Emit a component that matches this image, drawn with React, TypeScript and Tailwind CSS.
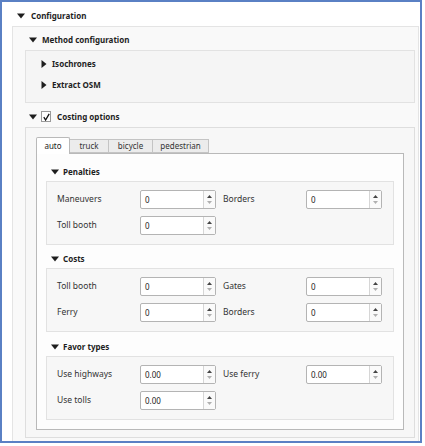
import React from "react";

const font = { fontFamily: '"Noto Sans", "Liberation Sans", sans-serif' };

function Down() {
    return (
        <svg width="8" height="6" viewBox="0 0 8 6" className="shrink-0">
            <path d="M0 0.5 L8 0.5 L4 5.5 Z" fill="#1e1e1e" />
        </svg>
    );
}

function Right() {
    return (
        <svg width="6" height="8" viewBox="0 0 6 8" className="shrink-0">
            <path d="M0.5 0 L5.5 4 L0.5 8 Z" fill="#1e1e1e" />
        </svg>
    );
}

function Spin({ value }: { value: string }) {
    return (
        <div className="w-[76px] h-[19px] flex bg-white border border-[#b4b4b4] rounded-[2px]">
            <div className="flex-1 flex items-center pl-[4px] text-[8px] text-[#222]">{value}</div>
            <div className="w-[12px] border-l border-[#d6d6d6] flex flex-col items-center justify-center gap-[3px] bg-[#fafafa]">
                <svg width="5" height="3" viewBox="0 0 5 3">
                    <path d="M0 3 L2.5 0 L5 3 Z" fill="#444" />
                </svg>
                <svg width="5" height="3" viewBox="0 0 5 3">
                    <path d="M0 0 L2.5 3 L5 0 Z" fill="#b0b0b0" />
                </svg>
            </div>
        </div>
    );
}

function Row({ label, value, label2, value2 }: { label: string; value: string; label2?: string; value2?: string }) {
    return (
        <div className="flex items-center h-[19px]">
            <div className="w-[83px] text-[8.5px] text-[#333]">{label}</div>
            <Spin value={value} />
            {label2 && (
                <>
                    <div className="w-[90px] pl-[7px] text-[8.5px] text-[#333]">{label2}</div>
                    <Spin value={value2 ?? ""} />
                </>
            )}
        </div>
    );
}

function Section({ title, children, mt }: { title: string; children: React.ReactNode; mt: string }) {
    return (
        <>
            <div className={`h-[18px] flex items-center gap-[4px] pl-[14px] ${mt}`}>
                <Down />
                <span className="text-[8px] font-bold text-[#1e1e1e]">{title}</span>
            </div>
            <div className="mx-[9px] h-[64px] border border-[#e2e2e2] bg-[#f7f7f7] pl-[10px] pt-[8px] flex flex-col gap-[7px]">
                {children}
            </div>
        </>
    );
}

export default function App() {
    return (
        <div className="w-[425px] h-[446px] bg-white" style={font}>
            <div className="w-[422px] h-[443px] border-2 border-[#5a80c4] flex flex-col">
                <div className="h-[24px] pt-[4px] flex items-center gap-[6px] pl-[15px] shrink-0">
                    <Down />
                    <span className="text-[8px] font-bold text-[#1e1e1e]">Configuration</span>
                </div>
                <div className="flex-1 ml-[10px] mr-[1px] border-l border-t border-r border-[#e4e4e4] bg-[#f9f9f9] flex flex-col">
                    <div className="h-[23px] pt-[3px] flex items-center gap-[5px] pl-[16px]">
                        <Down />
                        <span className="text-[8px] font-bold text-[#1e1e1e]">Method configuration</span>
                    </div>
                    <div className="ml-[12px] mr-[3px] h-[53px] border border-[#e2e2e2] bg-[#f5f5f5] flex flex-col pl-[15px] pt-[7px] gap-[9px]">
                        <div className="h-[12px] flex items-center gap-[5px]">
                            <Right />
                            <span className="text-[8px] font-bold text-[#1e1e1e]">Isochrones</span>
                        </div>
                        <div className="h-[12px] flex items-center gap-[5px]">
                            <Right />
                            <span className="text-[8px] font-bold text-[#1e1e1e]">Extract OSM</span>
                        </div>
                    </div>
                    <div className="mt-[3px] h-[21px] flex items-center pl-[16px]">
                        <Down />
                        <div className="ml-[4px] w-[10px] h-[11px] border border-[#9a9a9a] bg-white flex items-center justify-center">
                            <svg width="7" height="8" viewBox="0 0 7 8">
                                <path d="M0.8 4.2 L2.6 7 L6.2 0.8" stroke="#111" strokeWidth="1.3" fill="none" />
                            </svg>
                        </div>
                        <span className="ml-[6px] text-[8px] font-bold text-[#1e1e1e]">Costing options</span>
                    </div>
                    <div className="ml-[12px] mr-[3px] h-[311px] border border-[#dedede] bg-[#f7f7f7] pl-[10px] pr-[10px] pt-[8px]">
                        <div className="flex items-end h-[17px]">
                            <div className="h-[17px] w-[34px] bg-white border border-b-0 border-[#b9b9b9] rounded-t-[2px] flex items-center justify-center text-[8px] text-[#222] relative z-10 mb-[-1px] pb-[1px]">
                                auto
                            </div>
                            <div className="h-[14px] w-[39px] bg-[#ececec] border border-l-0 border-[#c4c4c4] flex items-center justify-center text-[8px] text-[#333]">
                                truck
                            </div>
                            <div className="h-[14px] w-[44px] bg-[#ececec] border border-l-0 border-[#c4c4c4] flex items-center justify-center text-[8px] text-[#333]">
                                bicycle
                            </div>
                            <div className="h-[14px] w-[56px] bg-[#ececec] border border-l-0 border-[#c4c4c4] flex items-center justify-center text-[8px] text-[#333]">
                                pedestrian
                            </div>
                        </div>
                        <div className="h-[277px] border border-[#b9b9b9] bg-[#fdfdfd] flex flex-col">
                            <Section title="Penalties" mt="mt-[9px]">
                                <Row label="Maneuvers" value="0" label2="Borders" value2="0" />
                                <Row label="Toll booth" value="0" />
                            </Section>
                            <Section title="Costs" mt="mt-[5px]">
                                <Row label="Toll booth" value="0" label2="Gates" value2="0" />
                                <Row label="Ferry" value="0" label2="Borders" value2="0" />
                            </Section>
                            <Section title="Favor types" mt="mt-[6px]">
                                <Row label="Use highways" value="0.00" label2="Use ferry" value2="0.00" />
                                <Row label="Use tolls" value="0.00" />
                            </Section>
                        </div>
                    </div>
                </div>
            </div>
        </div>
    );
}
